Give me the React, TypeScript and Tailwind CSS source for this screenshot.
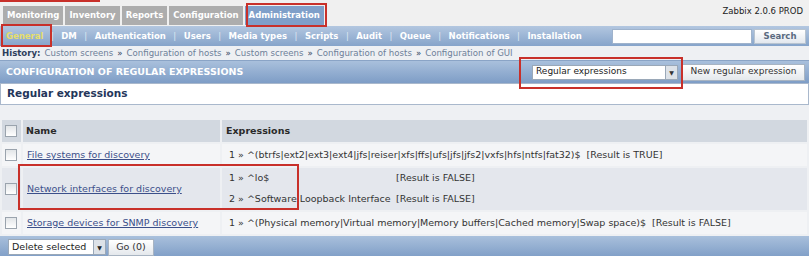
import React from "react";

const mainMenu = ["Monitoring", "Inventory", "Reports", "Configuration", "Administration"];
const subMenu = ["General", "DM", "Authentication", "Users", "Media types", "Scripts", "Audit", "Queue", "Notifications", "Installation"];
const history = ["Custom screens", "Configuration of hosts", "Custom screens", "Configuration of hosts", "Configuration of GUI"];

const rows = [
    { name: "File systems for discovery", exprs: [{ e: "1 » ^(btrfs|ext2|ext3|ext4|jfs|reiser|xfs|ffs|ufs|jfs|jfs2|vxfs|hfs|ntfs|fat32)$", r: "[Result is TRUE]", pad: false }], bg: "bg-[#f4f5f7]" },
    { name: "Network interfaces for discovery", exprs: [{ e: "1 » ^lo$", r: "[Result is FALSE]", pad: true }, { e: "2 » ^Software Loopback Interface", r: "[Result is FALSE]", pad: true }], bg: "bg-[#e4e7ed]" },
    { name: "Storage devices for SNMP discovery", exprs: [{ e: "1 » ^(Physical memory|Virtual memory|Memory buffers|Cached memory|Swap space)$", r: "[Result is FALSE]", pad: false }], bg: "bg-[#f4f5f7]" },
];

function Check() {
    return <span className="block h-[12px] w-[12px] border border-[#9aa3ad] bg-gradient-to-b from-[#e2e5e8] to-white" />;
}

export default function App() {
    return (
        <div className="relative h-[256px] w-[809px] overflow-hidden bg-[#eef0f3] text-[9.5px] text-[#333]" style={{ fontFamily: '"DejaVu Sans", Verdana, sans-serif' }}>
            {/* top menu */}
            <div className="flex h-[26px] items-end justify-between bg-[#f0f0f0] pl-[3px] pr-[6px]">
                <div className="flex gap-[2px] pb-[1px] text-[8.5px]">
                    {mainMenu.map((m) => (
                        <div
                            key={m}
                            className={`flex h-[19px] items-center px-[4px] font-bold text-white ${m === "Administration" ? "bg-[#7f9fc9]" : "bg-[#adadad]"}`}
                        >
                            {m}
                        </div>
                    ))}
                </div>
                <div className="pb-[8px] text-[8.5px] text-[#222]">Zabbix 2.0.6 PROD</div>
            </div>

            {/* sub menu */}
            <div className="flex h-[20px] items-center justify-between bg-gradient-to-b from-[#b3c7e0] to-[#86a4ca] pl-[6px] pr-[3px] text-[8.5px]">
                <div className="flex items-center font-bold text-white">
                    {subMenu.map((s, i) => (
                        <React.Fragment key={s}>
                            {i > 0 && <span className="px-[7.5px] font-normal text-[#dfe8f3]">|</span>}
                            <span className={s === "General" ? "text-[#e6de6a]" : ""}>{s}</span>
                        </React.Fragment>
                    ))}
                </div>
                <div className="flex items-center gap-[2px]">
                    <div className="h-[15px] w-[140px] border border-[#9fb3cc] bg-white" />
                    <div className="flex h-[15px] w-[52px] items-center justify-center border border-[#b8c4d0] bg-gradient-to-b from-white to-[#e3e8ee] font-bold text-[#5a6a80]">Search</div>
                </div>
            </div>

            {/* history */}
            <div className="flex h-[14px] items-center pl-[2px] text-[8.6px] text-[#6d7f99]">
                <span className="mr-[4px] font-bold text-[#2d3e5c]">History:</span>
                {history.map((h, i) => (
                    <React.Fragment key={i}>
                        {i > 0 && <span className="mx-[4px] text-[#2d3e5c]">»</span>}
                        <span>{h}</span>
                    </React.Fragment>
                ))}
            </div>

            {/* header */}
            <div className="flex h-[23px] items-center justify-between border-t border-[#8aa4c6] bg-gradient-to-b from-[#a9c0dc] to-[#7e9dc6] pl-[6px] pr-[4px]">
                <span className="font-bold text-white">CONFIGURATION OF REGULAR EXPRESSIONS</span>
                <div className="flex items-center gap-[4px] text-[9px]">
                    <div className="flex h-[15px] w-[146px] items-center border border-[#9aa8b8] bg-white pl-[3px] text-[#222]">
                        <span className="flex-1">Regular expressions</span>
                        <span className="flex h-[13px] w-[12px] items-center justify-center border-l border-[#9aa8b8] bg-[#dde2e8] text-[6px] text-[#333]">▼</span>
                    </div>
                    <div className="flex h-[17px] w-[123px] items-center justify-center border border-[#a8b4c2] bg-gradient-to-b from-white to-[#e4e8ec] text-[#333]">New regular expression</div>
                </div>
            </div>

            {/* title */}
            <div className="flex h-[22px] items-center border border-[#a9b8cc] bg-white pl-[6px] text-[10.5px] font-bold text-[#24365a]">Regular expressions</div>

            {/* table */}
            <div className="mt-[15px] px-[2px]">
                <div className="flex h-[22px] gap-[2px] bg-[#d2d8e0] font-bold text-[#2a2a2a]">
                    <div className="flex w-[17px] items-center justify-center"><Check /></div>
                    <div className="flex w-[197px] items-center border-l-2 border-[#eef0f3] pl-[3px]">Name</div>
                    <div className="flex flex-1 items-center border-l-2 border-[#eef0f3] pl-[4px]">Expressions</div>
                </div>
                {rows.map((r) => (
                    <div key={r.name} className={`mt-[2px] flex gap-[2px] ${r.bg}`} style={{ height: r.exprs.length > 1 ? 42 : 22 }}>
                        <div className="flex w-[17px] items-center justify-center"><Check /></div>
                        <div className="flex w-[197px] items-center border-l-2 border-[#eef0f3] pl-[4px] text-[#3b4f8a] underline">{r.name}</div>
                        <div className="flex flex-1 flex-col justify-around border-l-2 border-[#eef0f3] pl-[7px] text-[#333]">
                            {r.exprs.map((x) => (
                                <div key={x.e} className="flex whitespace-pre">
                                    {x.pad ? <span className="w-[167px]">{x.e}</span> : <span className="mr-[6px]">{x.e}</span>}
                                    <span>{x.r}</span>
                                </div>
                            ))}
                        </div>
                    </div>
                ))}
            </div>

            {/* footer */}
            <div className="mt-[2px] flex h-[22px] items-center gap-[2px] bg-gradient-to-b from-[#a9c0dc] to-[#7e9dc6] pl-[8px] text-[9.5px]">
                <div className="flex h-[16px] w-[98px] items-center border border-[#9aa8b8] bg-white pl-[3px] text-[#222]">
                    <span className="flex-1">Delete selected</span>
                    <span className="flex h-[14px] w-[12px] items-center justify-center border-l border-[#9aa8b8] bg-[#dde2e8] text-[6px]">▼</span>
                </div>
                <div className="flex h-[17px] w-[46px] items-center justify-center border border-[#a8b4c2] bg-gradient-to-b from-white to-[#e4e8ec] text-[#333]">Go (0)</div>
            </div>

            {/* red annotation boxes */}
            <div className="absolute left-0 top-0 h-[2px] w-[100px] bg-[#c8302a]" />
            <div className="absolute left-[246px] top-[3px] h-[24px] w-[81px] border-2 border-[#c8302a]" />
            <div className="absolute left-[1px] top-[24px] h-[23px] w-[51px] border-2 border-[#c8302a]" />
            <div className="absolute left-[519px] top-[57px] h-[32px] w-[164px] border-2 border-[#c8302a]" />
            <div className="absolute left-[18px] top-[164px] h-[46px] w-[281px] border-2 border-[#c8302a]" />
        </div>
    );
}
